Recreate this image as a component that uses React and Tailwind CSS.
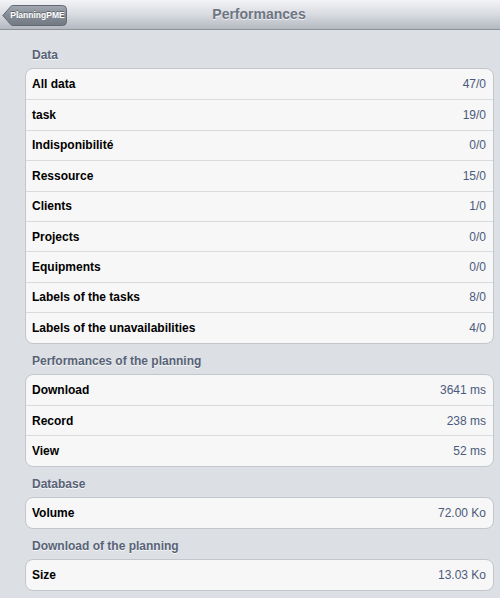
import React from 'react';

const sections = [
  {
    title: 'Data',
    rows: [
      ['All data', '47/0'],
      ['task', '19/0'],
      ['Indisponibilité', '0/0'],
      ['Ressource', '15/0'],
      ['Clients', '1/0'],
      ['Projects', '0/0'],
      ['Equipments', '0/0'],
      ['Labels of the tasks', '8/0'],
      ['Labels of the unavailabilities', '4/0'],
    ],
  },
  {
    title: 'Performances of the planning',
    rows: [
      ['Download', '3641 ms'],
      ['Record', '238 ms'],
      ['View', '52 ms'],
    ],
  },
  { title: 'Database', rows: [['Volume', '72.00 Ko']] },
  { title: 'Download of the planning', rows: [['Size', '13.03 Ko']] },
];

function BackButton() {
  return (
    <button className="relative ml-[1px] h-[21px] w-[65px] flex items-center justify-center pl-[6px]">
      <svg className="absolute inset-0" width="65" height="21" viewBox="0 0 65 21">
        <defs>
          <linearGradient id="bb" x1="0" y1="0" x2="0" y2="1">
            <stop offset="0" stopColor="#a3a9b1" />
            <stop offset="0.5" stopColor="#858b94" />
            <stop offset="1" stopColor="#737983" />
          </linearGradient>
        </defs>
        <path
          d="M0.8 10.5 L9 1.2 Q9.6 0.5 10.6 0.5 L60.5 0.5 Q64.5 0.5 64.5 4.5 L64.5 16.5 Q64.5 20.5 60.5 20.5 L10.6 20.5 Q9.6 20.5 9 19.8 Z"
          fill="url(#bb)"
          stroke="#636973"
        />
      </svg>
      <span className="relative text-[8.5px] font-bold text-white [text-shadow:0_-1px_0_rgba(0,0,0,0.35)]">PlanningPME</span>
    </button>
  );
}

export default function App() {
  return (
    <div
      className="w-[500px] h-[598px] overflow-hidden bg-[#dcdfe3]"
      style={{ fontFamily: '"Liberation Sans", Arial, sans-serif' }}
    >
      {/* nav bar */}
      <div className="h-[30px] flex items-center border-b border-[#8e939b] bg-gradient-to-b from-[#f3f4f6] via-[#d8dbe0] to-[#b3b8c0] relative">
        <div className="pl-[1px] pt-[1px]">
          <BackButton />
        </div>
        <div className="absolute inset-0 flex items-center justify-center pl-[18px]">
          <span className="text-[14px] font-bold text-[#6e7582] [text-shadow:0_1px_0_rgba(255,255,255,0.7)]">Performances</span>
        </div>
      </div>

      <div className="pl-[25px] pr-[6px]">
        {sections.map((s, i) => (
          <div key={s.title}>
            <div className={(i === 0 ? 'pt-[19px]' : 'pt-[11px]') + ' pb-[6px] pl-[7px]'}>
              <div className="text-[12px] leading-[13px] font-bold text-[#586277] [text-shadow:0_1px_0_rgba(255,255,255,0.8)]">
                {s.title}
              </div>
            </div>
            <div className="bg-[#f7f7f7] border border-[#c3c6cb] rounded-[8px] overflow-hidden">
              {s.rows.map(([label, value], j) => (
                <div
                  key={label}
                  className={
                    'h-[30.4px] flex items-center justify-between pl-[6px] pr-[7px] ' +
                    (j > 0 ? 'border-t border-[#d9dadc]' : '')
                  }
                >
                  <span className="text-[12px] font-bold text-black">{label}</span>
                  <span className="text-[12px] text-[#4b5a7c]">{value}</span>
                </div>
              ))}
            </div>
          </div>
        ))}
      </div>
    </div>
  );
}
